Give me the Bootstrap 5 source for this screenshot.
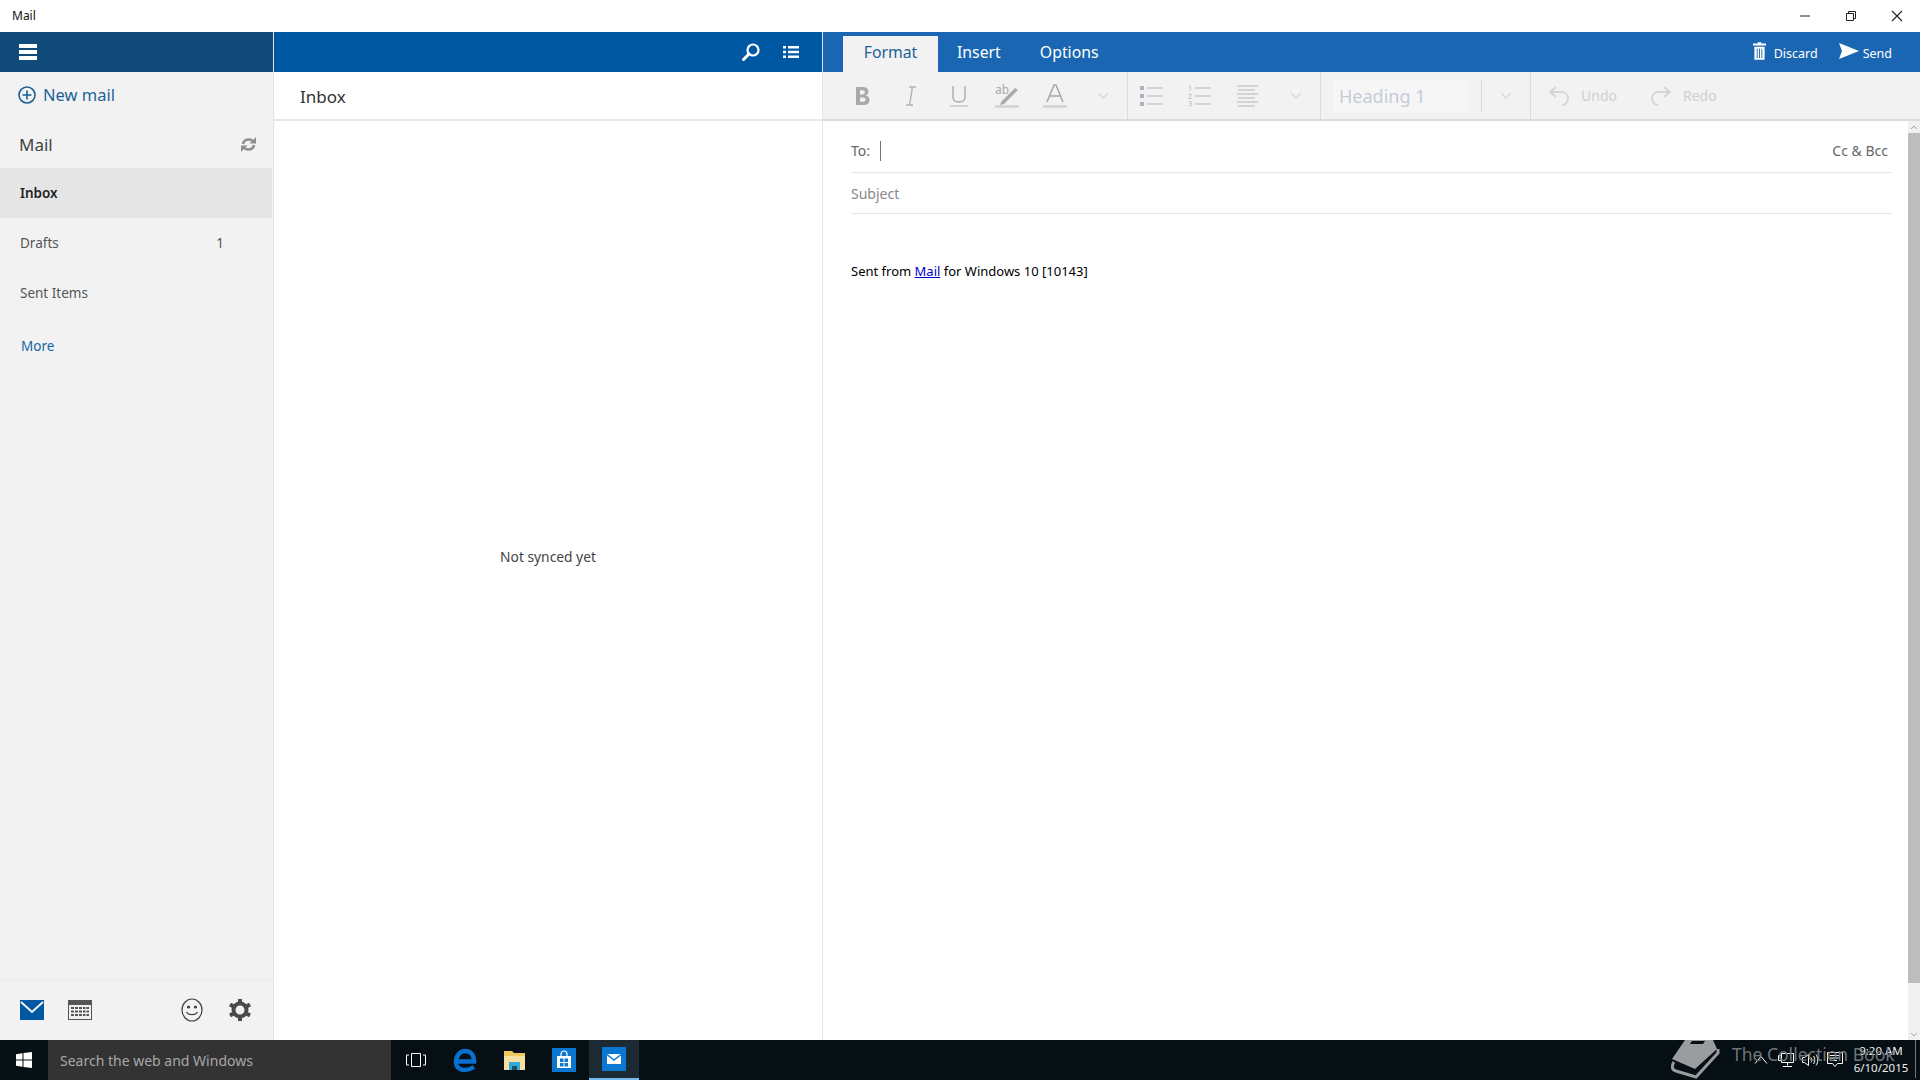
<!DOCTYPE html>
<html lang="en">
<head>
<meta charset="utf-8">
<title>Mail</title>
<link href="https://cdn.jsdelivr.net/npm/bootstrap@5.3.0/dist/css/bootstrap.min.css" rel="stylesheet">
<style>
html, body { height: 100%; overflow: hidden; }
body { font-family: "Noto Sans", "Liberation Sans", sans-serif; font-size: 14px; color: #222; background: #fff; }
svg { display: block; flex: none; overflow: visible; }
.app-shell { width: 1920px; height: 1080px; }
.title-bar { height: 32px; padding-left: 12px; font-size: 12px; color: #111; }
.win-btn { width: 46px; }
.work-area { height: 1008px; }

.side-pane { width: 274px; background: #f2f2f2; border-right: 1px solid #e6e6e6; }
.side-head { height: 40px; background: #134a7c; padding-left: 19px; }
.new-mail { height: 48px; padding: 0 0 2px 18px; gap: 7px; color: #1d6297; font-size: 16.500px; }
.mail-head { height: 48px; padding: 1px 17px 0 19px; font-size: 17px; color: #444; }
.folder-row { height: 50px; padding: 1px 48px 0 20px; color: #555; width: 272px; font-size: 13.500px; }
.folder-row.is-on { background: #e5e5e5; color: #222; font-weight: 600; }
.more-link { height: 56px; padding: 1px 0 0 21px; color: #1566a8; font-size: 13.500px; }
.side-foot { height: 60px; border-top: 1px solid #ebebeb; padding: 0 22px 2px 20px; }
.foot-gear { margin-left: 26px; }

.list-pane { width: 549px; border-right: 1px solid #e6e6e6; }
.list-head { height: 40px; background: #0058a3; padding-right: 23px; gap: 23px; }
.inbox-title { height: 49px; padding: 3px 0 0 26px; border-bottom: 2px solid #e8e8e8; font-size: 17px; color: #333; }
.empty-note { height: 872px; color: #444; font-size: 13.800px; }

.ribbon-tabs { height: 40px; background: #1a66b2; padding-left: 20px; color: #fff; font-size: 15.800px; }
.tab-item { height: 36px; margin-top: 4px; padding-bottom: 3px; }
.tab-on { width: 95px; background: #f2f2f2; color: #1d6297; }
.tab-off { padding-left: 19px; padding-right: 20px; }
.send-acts { margin-left: auto; height: 40px; padding-right: 28px; font-size: 12.500px; }
.act-icon { margin-bottom: 2px; }
.act-text { margin: 4px 21px 0 8px; }
.act-text-last { margin: 4px 0 0 4px; }
.tool-row { height: 49px; background: #f2f2f2; border-bottom: 2px solid #dcdcdc; padding-left: 16px; color: #c9c9c9; }
.tool-cell { width: 48px; height: 47px; }
.tool-sep { width: 1px; height: 47px; background: #dcdcdc; }
.head-box { width: 135px; height: 32px; margin: 0 13px 0 12px; padding: 2px 0 0 6px; background: #f6f6f6; color: #c3ccd6; font-size: 18px; }
.head-sep { width: 1px; height: 32px; background: #d8d8d8; }
.hist-btn { margin-left: 17px; font-size: 14px; color: #cfcfcf; }
.hist-gap { margin-left: 11px; }
.redo-icon { margin-left: 33px; }

.compose-pane { padding: 0 16px 0 28px; }
.compose-line { border-bottom: 1px solid #e6e6e6; color: #777; }
.to-line { height: 52px; padding-top: 8px; color: #666; }
.subj-line { height: 41px; color: #888; }
.caret-bar { width: 1px; height: 20px; background: #777; margin-left: 10px; }
.sig-line { margin-top: 48px; font-size: 13px; line-height: 18px; color: #000; }
.sig-line a { color: #0000cc; }
.scroll-rail { width: 12px; background: #f0f0f0; }
.scroll-btn { height: 12px; color: #a5a5a5; }
.scroll-thumb { height: 850px; background: #bdbdbd; }

.task-bar { height: 40px; background: #050f14; position: relative; color: #fff; }
.start-btn { width: 48px; }
.search-box { width: 343px; background: #333; padding-left: 12px; color: #a8a8a8; font-size: 14px; }
.task-cell { width: 49.500px; }
.task-cell.is-on { background: #1c2a33; border-bottom: 2px solid #76b9ed; }
.tray-zone { margin-left: auto; padding-right: 4px; }
.tray-cell { width: 24.500px; }
.clock-box { width: 62px; margin-left: 3px; padding-bottom: 2px; font-size: 11.500px; line-height: 17px; text-align: center; color: #eee; }
.show-desk { width: 1px; height: 38px; background: #777; margin-left: 3px; }
.watermark { position: absolute; left: 1670px; top: 0; height: 40px; gap: 12px; color: #6f7679; font-size: 17.500px; pointer-events: none; }
.watermark-text { margin-bottom: 12px; }
</style>
</head>
<body>
<div class="app-shell d-flex flex-column">

  <!-- window title -->
  <div class="title-bar d-flex align-items-center justify-content-between">
    <span>Mail</span>
    <div class="d-flex">
      <div class="win-btn d-flex justify-content-center"><svg width="12" height="12" viewBox="0 0 12 12"><path d="M1 6h10" stroke="#222"/></svg></div>
      <div class="win-btn d-flex justify-content-center"><svg width="12" height="12" viewBox="0 0 12 12" fill="none" stroke="#222"><path d="M1.500 3.500h7v7h-7zM3.500 3.500v-2h7v7h-2"/></svg></div>
      <div class="win-btn d-flex justify-content-center"><svg width="12" height="12" viewBox="0 0 12 12"><path d="M1 1l10 10M11 1L1 11" stroke="#222" stroke-width="1.100"/></svg></div>
    </div>
  </div>

  <div class="work-area d-flex">
    <!-- folders -->
    <div class="side-pane d-flex flex-column">
      <div class="side-head d-flex align-items-center">
        <svg width="18" height="16" viewBox="0 0 18 16" fill="#fff"><rect width="18" height="4"/><rect y="6" width="18" height="4"/><rect y="12" width="18" height="4"/></svg>
      </div>
      <div class="new-mail d-flex align-items-center">
        <svg width="18" height="18" viewBox="0 0 18 18" fill="none" stroke="#1d5f92" stroke-width="1.600"><circle cx="9" cy="9" r="8"/><path d="M9 4.500v9M4.500 9h9"/></svg>
        <span>New mail</span>
      </div>
      <div class="mail-head d-flex align-items-center justify-content-between">
        <span>Mail</span>
        <svg width="15" height="17" viewBox="0 0 15 17" fill="#8f8f8f"><path d="M2 8c.5-3 3-4.500 6-4.500 1.500 0 2.800.5 3.500 1.500" fill="none" stroke="#8f8f8f" stroke-width="2.600"/><path d="M15 1v6.500H8.500z"/><path d="M13 9c-.5 3-3 4.500-6 4.500-1.500 0-2.800-.5-3.500-1.500" fill="none" stroke="#8f8f8f" stroke-width="2.600"/><path d="M0 16V9.500h6.500z"/></svg>
      </div>
      <div class="folder-row is-on d-flex align-items-center"><span>Inbox</span></div>
      <div class="folder-row d-flex align-items-center justify-content-between"><span>Drafts</span><span>1</span></div>
      <div class="folder-row d-flex align-items-center"><span>Sent Items</span></div>
      <div class="more-link d-flex align-items-center"><span>More</span></div>
      <div class="side-foot mt-auto d-flex align-items-center">
        <svg width="24" height="20" viewBox="0 0 24 20"><rect width="24" height="20" fill="#0058a3"/><path d="M1 2l11 10L23 2" fill="none" stroke="#f2f2f2" stroke-width="2"/></svg>
        <svg class="ms-4" width="24" height="20" viewBox="0 0 24 20"><rect width="24" height="20" fill="#555"/><rect x="1" y="5" width="22" height="14" fill="#f2f2f2"/><path d="M3 7h18v2H3zM3 10.500h18v2H3zM3 14h18v2H3z" fill="#555"/><path d="M6.500 7v10M10.500 7v10M14.500 7v10M18 7v10" stroke="#f2f2f2"/></svg>
        <svg class="ms-auto" width="22" height="24" viewBox="0 0 22 24" fill="none" stroke="#444" stroke-width="1.200"><ellipse cx="11" cy="12" rx="10" ry="11"/><circle cx="7.500" cy="9" r="1" fill="#444"/><circle cx="14.500" cy="9" r="1" fill="#444"/><path d="M5.500 14c1.500 3.500 9.500 3.500 11 0"/></svg>
        <svg class="foot-gear" width="22" height="24" viewBox="0 0 22 24"><circle cx="11" cy="12" r="6.500" fill="none" stroke="#4a4a4a" stroke-width="4"/><path d="M11 1v5M11 18v5M1 6.500l4.500 2.500M16.500 15l4.500 2.500M1 17.500L5.500 15M16.500 9L21 6.500" stroke="#4a4a4a" stroke-width="4"/></svg>
      </div>
    </div>

    <!-- message list -->
    <div class="list-pane d-flex flex-column">
      <div class="list-head d-flex align-items-center justify-content-end">
        <svg width="18" height="18" viewBox="0 0 18 18" fill="none" stroke="#fff" stroke-width="2.200"><circle cx="11" cy="7" r="5.500"/><path d="M7 11l-5.500 5.500" stroke-width="3" stroke-linecap="round"/></svg>
        <svg width="16" height="12" viewBox="0 0 16 12" fill="#fff"><path d="M0 0h3v2.500H0zM5 0h11v2.500H5zM0 4.750h3v2.500H0zM5 4.750h11v2.500H5zM0 9.500h3V12H0zM5 9.500h11V12H5z"/></svg>
      </div>
      <div class="inbox-title d-flex align-items-center">Inbox</div>
      <div class="empty-note d-flex align-items-center justify-content-center"><span>Not synced yet</span></div>
    </div>

    <!-- compose -->
    <div class="d-flex flex-column flex-grow-1">
      <div class="ribbon-tabs d-flex align-items-center">
        <div class="tab-item tab-on d-flex align-items-center justify-content-center">Format</div>
        <div class="tab-item tab-off d-flex align-items-center">Insert</div>
        <div class="tab-item tab-off d-flex align-items-center">Options</div>
        <div class="send-acts d-flex align-items-center">
          <svg class="act-icon" width="13" height="18" viewBox="0 0 14 19" fill="#fff"><path d="M5 0h4v1.500h5V3.500H0V1.500h5zM1.500 5h11v14h-11zM4 7v10h1V7zM6.500 7v10h1V7zM9 7v10h1V7z" fill-rule="evenodd"/></svg>
          <span class="act-text">Discard</span>
          <svg class="act-icon" width="20" height="16" viewBox="0 0 20 16" fill="#fff"><path d="M0 0l20 8L0 16l3-8z"/></svg>
          <span class="act-text-last">Send</span>
        </div>
      </div>
      <div class="tool-row d-flex align-items-center">
        <div class="tool-cell d-flex align-items-center justify-content-center"><svg width="16" height="20" viewBox="0 0 16 20" fill="#a9a9a9"><path d="M1 1h7c3.500 0 5.500 1.500 5.500 4.500 0 2-1 3.500-3 4 2.500.5 4 2 4 4.500 0 3.500-2.500 5-6 5H1zM5 4.200V8.500h2.500c1.500 0 2.300-.8 2.300-2.200S9 4.200 7.500 4.200zM5 11.500v4.300h3c1.600 0 2.500-.8 2.500-2.200s-.9-2.100-2.500-2.100z" fill-rule="evenodd"/></svg></div>
        <div class="tool-cell d-flex align-items-center justify-content-center"><svg width="12" height="20" viewBox="0 0 12 20" fill="none" stroke="#b4b4b4" stroke-width="1.500"><path d="M4 1h7M1 19h7M7.500 1L4.500 19"/></svg></div>
        <div class="tool-cell d-flex align-items-center justify-content-center"><svg width="18" height="22" viewBox="0 0 18 22" fill="none" stroke="#aaa" stroke-width="1.400"><path d="M3 1v11c0 3.500 2.300 5 6 5s6-1.500 6-5V1"/><path d="M0 21h18" stroke="#c4c4c4"/></svg></div>
        <div class="tool-cell d-flex align-items-center justify-content-center"><svg width="24" height="24" viewBox="0 0 24 24"><text x="0" y="10" font-size="12" fill="#aaa" font-family="Noto Sans">ab</text><path d="M6 18L20 4l3 2L9 20l-4 1z" fill="#aaa"/><rect y="21" width="24" height="3" fill="#d6d6d6"/></svg></div>
        <div class="tool-cell d-flex align-items-center justify-content-center"><svg width="24" height="24" viewBox="0 0 24 24"><path d="M4 18L11 1h2l7 17M7 12h10" fill="none" stroke="#a6a6a6" stroke-width="1.500"/><rect y="21" width="24" height="3" fill="#d6d6d6"/></svg></div>
        <div class="tool-cell d-flex align-items-center justify-content-center"><svg width="12" height="7" viewBox="0 0 12 7" fill="none" stroke="#d9d9d9" stroke-width="1.300"><path d="M1 1l5 5 5-5"/></svg></div>
        <div class="tool-sep"></div>
        <div class="tool-cell d-flex align-items-center justify-content-center"><svg width="24" height="20" viewBox="0 0 24 20"><path d="M7 2h16M7 10h16M7 18h16" stroke="#b5b5b5"/><path d="M0 0h4v4H0zM0 8h4v4H0zM0 16h4v4H0z" fill="#a9b4c0"/></svg></div>
        <div class="tool-cell d-flex align-items-center justify-content-center"><svg width="24" height="20" viewBox="0 0 24 20"><path d="M7 2h16M7 10h16M7 18h16" stroke="#b5b5b5"/><text x="0" y="5" font-size="7" fill="#a9b4c0" font-family="Noto Sans">1</text><text x="0" y="12.500" font-size="7" fill="#a9b4c0" font-family="Noto Sans">2</text><text x="0" y="20" font-size="7" fill="#a9b4c0" font-family="Noto Sans">3</text></svg></div>
        <div class="tool-cell d-flex align-items-center justify-content-center"><svg width="22" height="22" viewBox="0 0 22 22"><path d="M0 1h21M1 5h17M0 9h21M1 13h17M0 17h21M1 21h17" stroke="#b5b5b5"/></svg></div>
        <div class="tool-cell d-flex align-items-center justify-content-center"><svg width="12" height="7" viewBox="0 0 12 7" fill="none" stroke="#d9d9d9" stroke-width="1.300"><path d="M1 1l5 5 5-5"/></svg></div>
        <div class="tool-sep"></div>
        <div class="head-box d-flex align-items-center">Heading 1</div>
        <div class="head-sep"></div>
        <div class="tool-cell d-flex align-items-center justify-content-center"><svg width="12" height="7" viewBox="0 0 12 7" fill="none" stroke="#d9d9d9" stroke-width="1.300"><path d="M1 1l5 5 5-5"/></svg></div>
        <div class="tool-sep"></div>
        <div class="hist-btn d-flex align-items-center">
          <svg width="22" height="20" viewBox="0 0 22 20" fill="none" stroke="#d4d4d4" stroke-width="1.800"><path d="M8 1L2 6l6 5"/><path d="M2 6h11c4 0 7 2.500 7 6s-2.500 7-6 7"/></svg>
          <span class="hist-gap">Undo</span>
          <svg class="redo-icon" width="22" height="20" viewBox="0 0 22 20" fill="none" stroke="#d4d4d4" stroke-width="1.800"><path d="M14 1l6 5-6 5"/><path d="M20 6H9c-4 0-7 2.500-7 6s2.500 7 6 7"/></svg>
          <span class="hist-gap">Redo</span>
        </div>
      </div>
      <div class="d-flex flex-grow-1">
        <div class="compose-pane flex-grow-1">
          <div class="compose-line to-line d-flex align-items-center justify-content-between">
            <div class="d-flex align-items-center"><span>To:</span><div class="caret-bar"></div></div>
            <span class="me-1">Cc &amp; Bcc</span>
          </div>
          <div class="compose-line subj-line d-flex align-items-center">Subject</div>
          <div class="sig-line">Sent from <a href="#">Mail</a> for Windows 10 [10143]</div>
        </div>
        <div class="scroll-rail d-flex flex-column">
          <div class="scroll-btn d-flex align-items-center justify-content-center"><svg width="8" height="5" viewBox="0 0 8 5" fill="none" stroke="#a5a5a5"><path d="M1 4l3-3 3 3"/></svg></div>
          <div class="scroll-thumb"></div>
          <div class="scroll-btn mt-auto d-flex align-items-center justify-content-center"><svg width="8" height="5" viewBox="0 0 8 5" fill="none" stroke="#a5a5a5"><path d="M1 1l3 3 3-3"/></svg></div>
        </div>
      </div>
    </div>
  </div>

  <!-- taskbar -->
  <div class="task-bar d-flex">
    <div class="start-btn d-flex align-items-center justify-content-center">
      <svg width="16" height="16" viewBox="0 0 16 16" fill="#fff"><path d="M0 2.300l6.500-1v6.200H0zM7.500 1.100L16 0v7.500H7.500zM0 8.500h6.500v6.200l-6.500-1zM7.500 8.500H16V16l-8.500-1.100z"/></svg>
    </div>
    <div class="search-box d-flex align-items-center">Search the web and Windows</div>
    <div class="task-cell d-flex align-items-center justify-content-center">
      <svg width="20" height="16" viewBox="0 0 20 16" fill="none" stroke="#fff"><path d="M5.500 1.500h9v13h-9zM3 3H.5v10H3M17 3h2.500v10H17"/></svg>
    </div>
    <div class="task-cell d-flex align-items-center justify-content-center">
      <svg width="24" height="24" viewBox="0 0 24 24" fill="none" stroke="#0a70d0" stroke-width="4.500"><path d="M3 13.500H21C21 6 17 3 12 3 7 3 3 8 3 14c0 6 5 8 9 8 3 0 6-1 9-3"/></svg>
    </div>
    <div class="task-cell d-flex align-items-center justify-content-center">
      <svg width="21" height="19" viewBox="0 0 21 19"><path d="M0 0h8l2 2h11v17H0z" fill="#f0c95e"/><rect y="5" width="21" height="14" fill="#f6e2a0"/><rect x="5" y="11" width="11" height="8" fill="#33a9dd"/><rect x="8" y="15" width="5" height="4" fill="#1d4f66"/></svg>
    </div>
    <div class="task-cell d-flex align-items-center justify-content-center">
      <svg width="24" height="24" viewBox="0 0 24 24"><rect width="24" height="24" fill="#0a78d2"/><path d="M5 8h14v12H5z" fill="#fff"/><path d="M9 8V6a3 3 0 016 0v2" fill="none" stroke="#fff" stroke-width="1.200"/><path d="M8 10.500h3.500V14H8zM12.500 10.500H16V14h-3.500zM8 15h3.500v3.500H8zM12.500 15H16v3.500h-3.500z" fill="#0a78d2"/></svg>
    </div>
    <div class="task-cell is-on d-flex align-items-center justify-content-center">
      <svg width="24" height="24" viewBox="0 0 24 24"><rect width="24" height="24" fill="#0a78d2"/><rect x="5" y="7" width="14" height="10" fill="#fff"/><path d="M5 7.500l7 5.500 7-5.500" fill="none" stroke="#0a78d2" stroke-width="1.500"/></svg>
    </div>
    <div class="tray-zone d-flex">
      <div class="tray-cell d-flex align-items-center justify-content-center"><svg width="14" height="8" viewBox="0 0 14 8" fill="none" stroke="#fff"><path d="M1 7.500l6-7 6 7"/></svg></div>
      <div class="tray-cell d-flex align-items-center justify-content-center"><svg width="16" height="16" viewBox="0 0 16 16" fill="none" stroke="#fff"><path d="M3.500 1.500h12v9h-12zM9.500 10.500v3M5 14.500h9"/><path d="M.5 3.500h3v5h-3z" fill="#050f14"/></svg></div>
      <div class="tray-cell d-flex align-items-center justify-content-center"><svg width="16" height="14" viewBox="0 0 16 14" fill="none" stroke="#fff"><path d="M.5 4.500h2l4-3v11l-4-3h-2zM9 4.500c1 1.500 1 3.500 0 5M11.500 3c1.700 2.500 1.700 5.500 0 8M14 1.500c2.300 3 2.300 8 0 11"/></svg></div>
      <div class="tray-cell d-flex align-items-center justify-content-center"><svg width="16" height="16" viewBox="0 0 16 16" fill="none" stroke="#fff"><path d="M.5.500h15v11h-5l-2.500 3-2.500-3h-5zM3 3.500h10M3 6h10M3 8.500h7"/></svg></div>
      <div class="clock-box d-flex flex-column justify-content-center"><span>9:20 AM</span><span>6/10/2015</span></div>
      <div class="show-desk"></div>
    </div>
    <div class="watermark d-flex align-items-center">
      <svg width="50" height="40" viewBox="0 0 50 40"><path d="M15 0H43L47 9 25 29 2 19z" fill="#9a9c9d"/><path d="M22 1h13l-2 3H20z" fill="#050f14"/><path d="M4 22C1 26 2 30 6 31l20 6L48 13V9" fill="none" stroke="#9a9c9d" stroke-width="3"/></svg>
      <span class="watermark-text">The Collection Book</span>
    </div>
  </div>
</div>
<script src="https://cdn.jsdelivr.net/npm/bootstrap@5.3.0/dist/js/bootstrap.bundle.min.js"></script>
</body>
</html>
